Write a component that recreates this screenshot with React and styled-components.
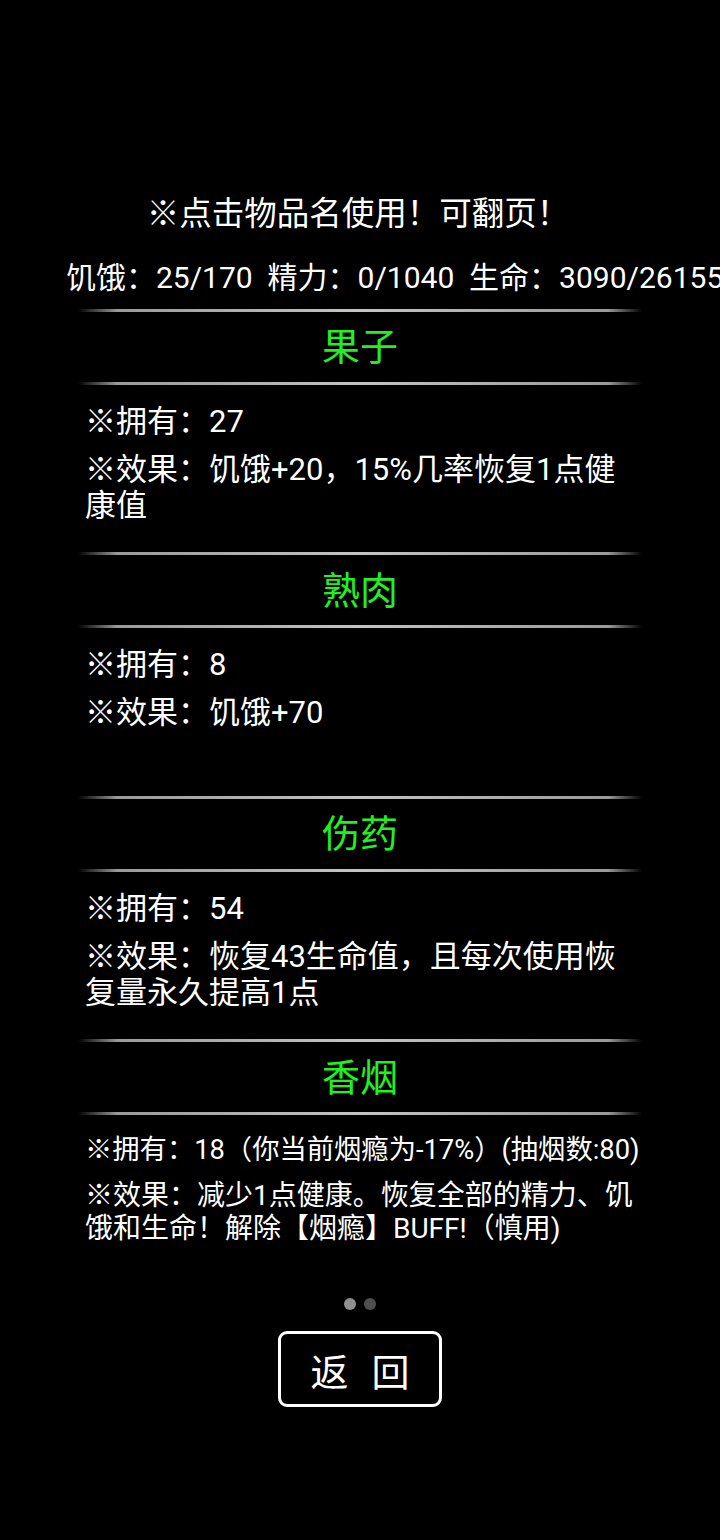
import styled, { createGlobalStyle } from "styled-components";

const GlobalStyle = createGlobalStyle`
  html, body {
    margin: 0;
    padding: 0;
    background: #000;
  }
  body {
    color: #fff;
    font-family: Roboto, "Noto Sans CJK SC", sans-serif;
  }
`;

const Page = styled.main`
  width: 720px;
  min-height: 1540px;
  box-sizing: border-box;
  padding-top: 194px;
  display: flex;
  flex-direction: column;
  align-items: center;
  overflow: hidden;
`;

const Hint = styled.div`
  font-size: 32.5px;
  line-height: 40px;
  height: 40px;
  margin-right: 4px;
`;

const Stats = styled.div`
  align-self: stretch;
  margin-top: 24px;
  padding-left: 66px;
  font-size: 30px;
  line-height: 40px;
  height: 40px;
  white-space: nowrap;
  overflow: hidden;
`;

const ItemList = styled.div`
  width: 564px;
  margin-top: 10.5px;
`;

const ItemSection = styled.section`
  height: 243.5px;
  display: flex;
  flex-direction: column;
`;

const Divider = styled.div`
  height: 3px;
  flex-shrink: 0;
  background: linear-gradient(
    to right,
    rgba(170, 170, 170, 0) 0%,
    #9a9a9a 7%,
    #c4c4c4 50%,
    #9a9a9a 94%,
    rgba(170, 170, 170, 0) 100%
  );
`;

const ItemName = styled.button`
  height: 70px;
  flex-shrink: 0;
  display: flex;
  align-items: center;
  justify-content: center;
  background: none;
  border: 0;
  padding: 0 0 6px;
  font-family: inherit;
  font-size: 38px;
  color: #22f022;
  cursor: pointer;
`;

const ItemBody = styled.div`
  padding: 19px 0 0 7px;
  font-size: ${(p) => (p.$small ? "28px" : "31px")};
  line-height: ${(p) => (p.$small ? "33px" : "36px")};
`;

const InfoLine = styled.p`
  margin: 0;
  white-space: ${(p) => (p.$nowrap ? "nowrap" : "normal")};
  font-size: ${(p) => (p.$nowrap ? "27.3px" : "inherit")};
  & + & {
    margin-top: ${(p) => (p.$small ? "12px" : "11px")};
  }
`;

const Pager = styled.div`
  display: flex;
  gap: 8px;
  margin-top: 15.5px;
`;

const Dot = styled.span`
  width: 12px;
  height: 12px;
  border-radius: 50%;
  background: ${(p) => (p.$active ? "#8f8f8f" : "#4f4f4f")};
`;

const BackButton = styled.button`
  margin-top: 21px;
  width: 164px;
  height: 76px;
  box-sizing: border-box;
  border: 3px solid #fff;
  border-radius: 9px;
  background: #000;
  color: #fff;
  font-family: inherit;
  font-size: 38px;
  display: flex;
  align-items: center;
  justify-content: center;
  gap: 23px;
  padding: 0;
  cursor: pointer;
`;

const items = [
  { name: "果子", count: "27", effect: "饥饿+20，15%几率恢复1点健康值" },
  { name: "熟肉", count: "8", effect: "饥饿+70" },
  { name: "伤药", count: "54", effect: "恢复43生命值，且每次使用恢复量永久提高1点" },
  {
    name: "香烟",
    count: "18（你当前烟瘾为-17%）(抽烟数:80)",
    effect: "减少1点健康。恢复全部的精力、饥饿和生命！解除【烟瘾】BUFF!（慎用)",
    small: true,
  },
];

export default function App() {
  return (
    <>
      <GlobalStyle />
      <Page>
        <Hint>※点击物品名使用！可翻页！</Hint>
        <Stats>饥饿：25/170&nbsp;&nbsp;精力：0/1040&nbsp;&nbsp;生命：3090/26155</Stats>
        <ItemList>
          {items.map((it) => (
            <ItemSection key={it.name}>
              <Divider />
              <ItemName>{it.name}</ItemName>
              <Divider />
              <ItemBody $small={it.small}>
                <InfoLine $small={it.small} $nowrap={it.small}>
                  ※拥有：{it.count}
                </InfoLine>
                <InfoLine $small={it.small}>※效果：{it.effect}</InfoLine>
              </ItemBody>
            </ItemSection>
          ))}
        </ItemList>
        <Pager>
          <Dot $active />
          <Dot />
        </Pager>
        <BackButton>
          <span>返</span>
          <span>回</span>
        </BackButton>
      </Page>
    </>
  );
}
